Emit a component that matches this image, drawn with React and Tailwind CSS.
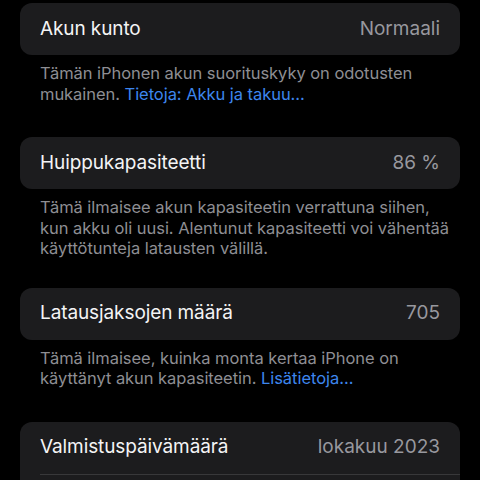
import React from 'react';

const rows = [
    {
        label: 'Akun kunto',
        value: 'Normaali',
        note: 'Tämän iPhonen akun suorituskyky on odotusten mukainen.',
        link: 'Tietoja: Akku ja takuu…',
        gap: 'mb-[33px]',
    },
    {
        label: 'Huippukapasiteetti',
        value: '86 %',
        note: 'Tämä ilmaisee akun kapasiteetin verrattuna siihen, kun akku oli uusi. Alentunut kapasiteetti voi vähentää käyttötunteja latausten välillä.',
        gap: 'mb-[29px]',
    },
    {
        label: 'Latausjaksojen määrä',
        value: '705',
        note: 'Tämä ilmaisee, kuinka monta kertaa iPhone on käyttänyt akun kapasiteetin.',
        link: 'Lisätietoja…',
        gap: 'mb-[33px]',
    },
];

const Row = ({ label, value }) => (
    <div className="h-[52px] flex items-center justify-between px-5">
        <span className="text-[19px] text-[#f4f4f5] tracking-[-0.1px]">{label}</span>
        <span className="text-[19px] text-[#98989e]">{value}</span>
    </div>
);

const App = () => {
    return (
        <div
            className="w-[480px] h-[480px] overflow-hidden bg-black px-5 pt-[3px]"
            style={{ fontFamily: 'Inter, "Noto Sans", sans-serif' }}
        >
            {rows.map((r) => (
                <div key={r.label} className={r.gap}>
                    <div className="rounded-xl bg-[#1c1c1e]">
                        <Row label={r.label} value={r.value} />
                    </div>
                    <p className="pl-5 pt-2 text-[16.5px] leading-[20.5px] tracking-[-0.05px] text-[#8e8e93]">
                        {r.note}{' '}
                        {r.link && <a className="text-[#3d86ee]">{r.link}</a>}
                    </p>
                </div>
            ))}

            {/* last group: first row and divider, list continues below */}
            <div className="rounded-xl bg-[#1c1c1e] h-[80px]">
                <Row label="Valmistuspäivämäärä" value="lokakuu 2023" />
                <div className="ml-5 h-px bg-[#38383a]" />
            </div>
        </div>
    );
};

export default App;
